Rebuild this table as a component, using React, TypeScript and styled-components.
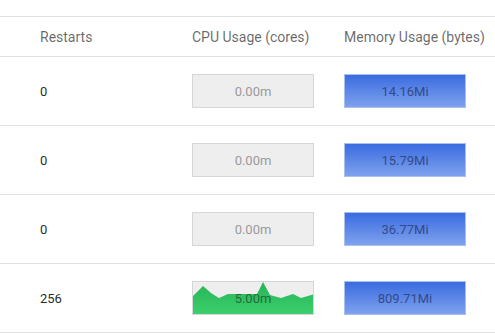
import React from 'react'
import styled, {createGlobalStyle} from 'styled-components'

const GlobalStyle = createGlobalStyle`
    body {
        margin: 0;
        background: #fff;
        font-family: Roboto, "Liberation Sans", sans-serif;
    }
`

interface PodRow {
    restarts: number;
    cpu: string;
    memory: string;
    spark?: number[];
}

const rows: PodRow[] = [
    {restarts: 0, cpu: '0.00m', memory: '14.16Mi'},
    {restarts: 0, cpu: '0.00m', memory: '15.79Mi'},
    {restarts: 0, cpu: '0.00m', memory: '36.77Mi'},
    {restarts: 256, cpu: '5.00m', memory: '809.71Mi', spark: [
        14, 4, 11, 16, 12, 12, 12, 12, 0, 13, 16, 12, 16, 12,
    ]},
]

const sparkX = [0, 10, 18, 26, 35, 48, 60, 64, 70, 77, 88, 100, 108, 122]

const Page = styled.div`
    padding-top: 16px;
    width: 495px;
    overflow: hidden;
`

const Table = styled.div`
    border-top: 1px solid #e0e0e0;
`

const Row = styled.div<{header?: boolean}>`
    display: grid;
    grid-template-columns: 192px 152px 1fr;
    align-items: center;
    height: ${props => props.header ? 39 : 68}px;
    border-bottom: 1px solid #e0e0e0;
`

const HeadCell = styled.div<{first?: boolean}>`
    padding-left: ${props => props.first ? 40 : 0}px;
    font-size: 14px;
    color: rgba(0, 0, 0, 0.6);
    white-space: nowrap;
`

const Cell = styled.div<{first?: boolean}>`
    padding-left: ${props => props.first ? 40 : 0}px;
    font-size: 13px;
    color: rgba(0, 0, 0, 0.87);
`

const Gauge = styled.div<{kind: 'cpu' | 'mem'}>`
    position: relative;
    box-sizing: border-box;
    width: 122px;
    height: 34px;
    display: flex;
    align-items: center;
    justify-content: center;
    font-size: 13px;
    border: 1px solid ${props => props.kind === 'mem' ? '#a9bff0' : '#d6d6d6'};
    background: ${props => props.kind === 'mem'
        ? 'linear-gradient(#3a6ce0, #7fa2ee)'
        : '#eeeeee'};
    color: ${props => props.kind === 'mem' ? '#33498a' : '#9a9a9a'};
`

const Spark = styled.svg`
    position: absolute;
    inset: 0;
    width: 100%;
    height: 100%;
`

const GaugeText = styled.span<{dark?: boolean}>`
    position: relative;
    color: ${props => props.dark ? '#256b39' : 'inherit'};
`

function Sparkline({points}: {points: number[]}) {
    const d = 'M0 32 ' + points.map((y, i) => `L${sparkX[i]} ${y}`).join(' ') + ' L122 32 Z'
    return (
        <Spark viewBox="0 0 120 32" preserveAspectRatio="none">
            <defs>
                <linearGradient id="sparkFill" x1="0" y1="0" x2="0" y2="1">
                    <stop offset="0" stopColor="#27b357" />
                    <stop offset="1" stopColor="#3ccf6c" />
                </linearGradient>
            </defs>
            <path d={d} fill="url(#sparkFill)" />
        </Spark>
    )
}

function App() {
    return (
        <Page>
            <GlobalStyle />
            <Table>
                <Row header>
                    <HeadCell first>Restarts</HeadCell>
                    <HeadCell>CPU Usage (cores)</HeadCell>
                    <HeadCell>Memory Usage (bytes)</HeadCell>
                </Row>
                {rows.map((row, index) =>
                    <Row key={index}>
                        <Cell first>{row.restarts}</Cell>
                        <Cell>
                            <Gauge kind="cpu">
                                {row.spark && <Sparkline points={row.spark} />}
                                <GaugeText dark={!!row.spark}>{row.cpu}</GaugeText>
                            </Gauge>
                        </Cell>
                        <Cell>
                            <Gauge kind="mem">{row.memory}</Gauge>
                        </Cell>
                    </Row>
                )}
            </Table>
        </Page>
    )
}

export default App
